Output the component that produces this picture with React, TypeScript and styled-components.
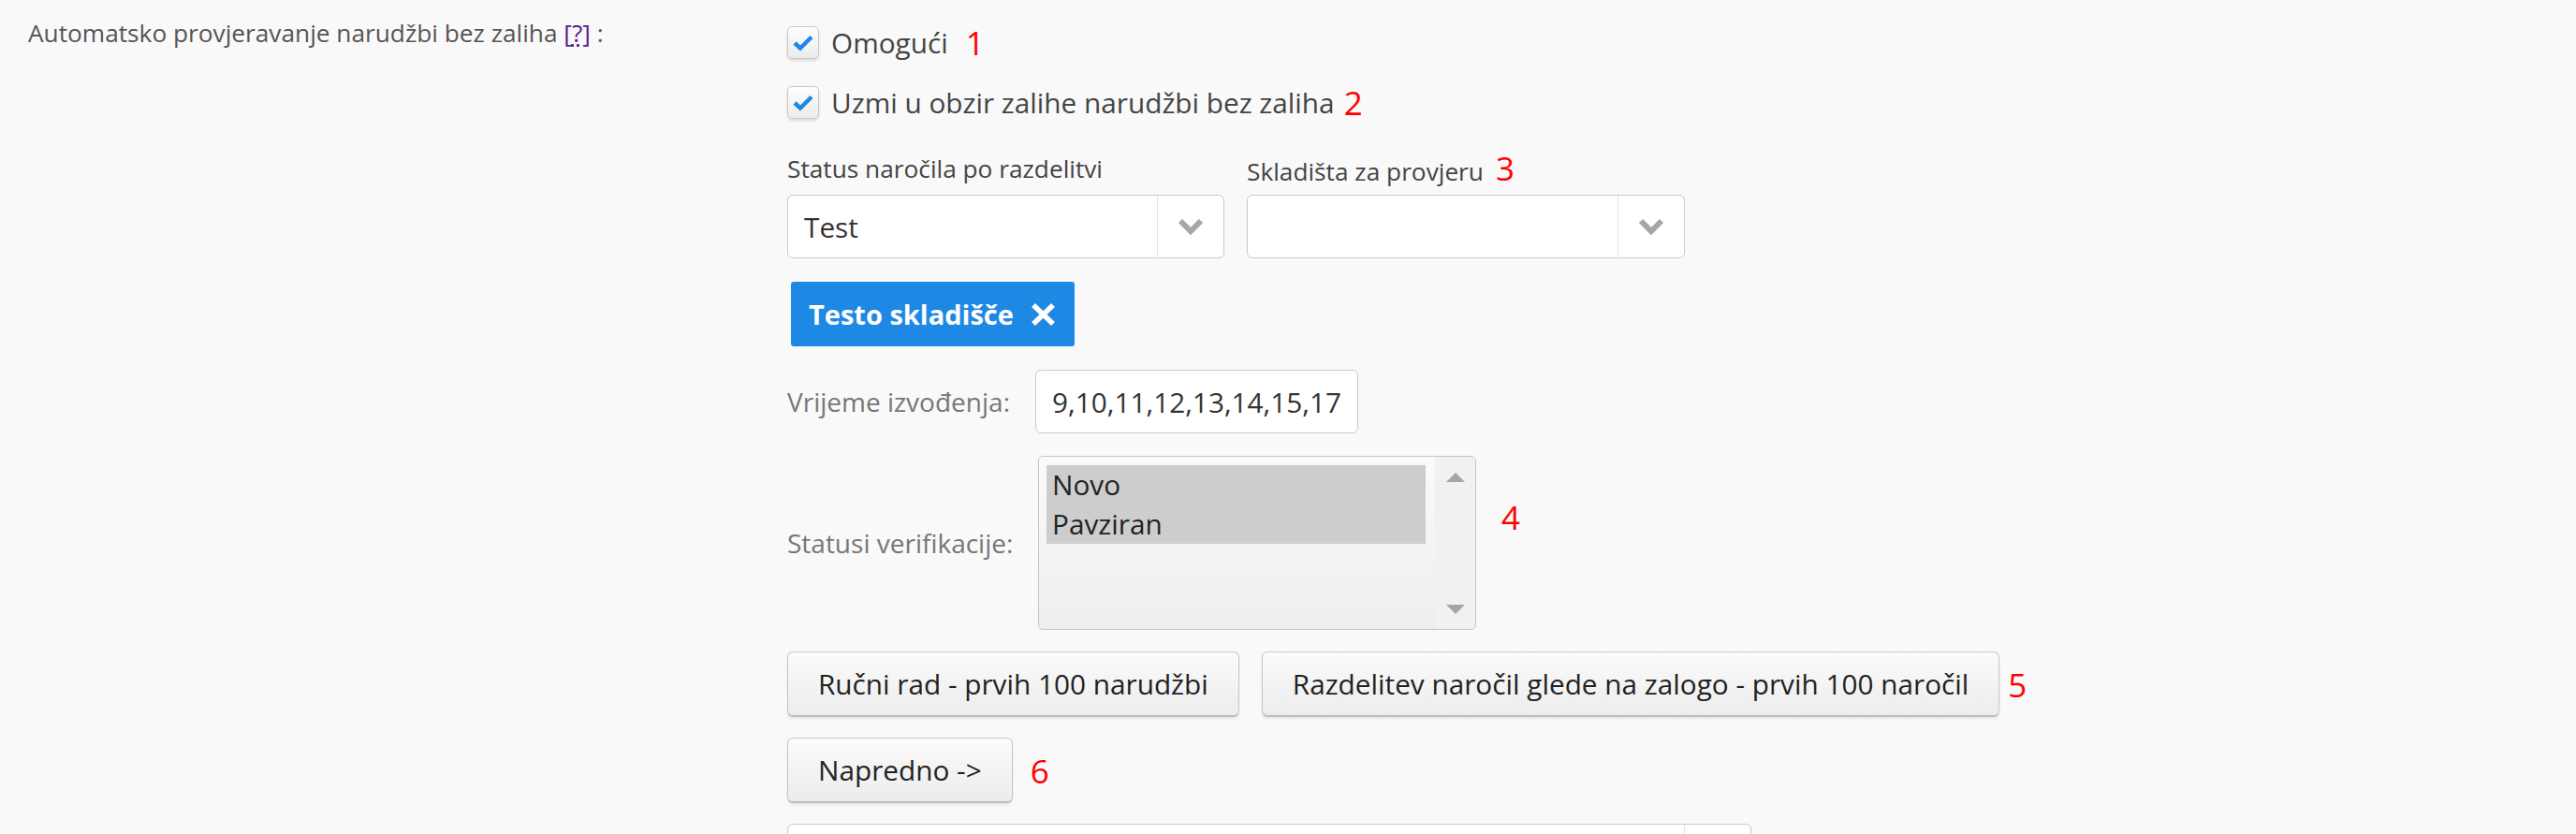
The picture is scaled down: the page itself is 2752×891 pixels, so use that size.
import React from 'react';
import styled, {createGlobalStyle} from 'styled-components';

const GlobalStyle = createGlobalStyle`
	html, body {
		margin: 0;
		padding: 0;
		background: #f9f9f9;
		overflow: hidden;
	}
	body {
		font-family: 'Open Sans', 'Liberation Sans', sans-serif;
		color: #444;
	}
`;

const Page = styled.div`
	display: grid;
	grid-template-columns: 811px 1fr;
	padding-left: 30px;
	height: 891px;
`;

const RowLabel = styled.div`
	padding-top: 17px;
	font-size: 26.25px;
	color: #555;
`;

const Help = styled.a`
	color: #551a8b;
	text-decoration: none;
	span {
		text-decoration: underline dotted;
	}
`;

const Content = styled.div`
	padding-top: 28px;
	display: flex;
	flex-direction: column;
	align-items: flex-start;
`;

const CheckRow = styled.label<{$gap: number}>`
	display: flex;
	align-items: center;
	height: 35px;
	margin-bottom: ${({$gap}) => $gap}px;
	font-size: 29.75px;
	color: #444;
`;

const Box = styled.span`
	box-sizing: border-box;
	width: 34px;
	height: 35px;
	margin-right: 13px;
	border: 1px solid #c8c8c8;
	border-radius: 5px;
	background: linear-gradient(#fdfdfd, #ececec);
	box-shadow: 0 2px 3px rgba(0, 0, 0, 0.12);
	display: flex;
	align-items: center;
	justify-content: center;
`;

const Mark = styled.span<{$left: number; $top?: number}>`
	color: #ff0000;
	font-size: 35px;
	line-height: 1;
	margin-left: ${({$left}) => $left}px;
	margin-top: ${({$top}) => $top ?? 0}px;
`;

const Fields = styled.div`
	display: grid;
	grid-template-columns: 467px 468px;
	column-gap: 24px;
`;

const Field = styled.div`
	display: flex;
	flex-direction: column;
	gap: 10px;
`;

const FieldLabel = styled.div`
	font-size: 26.25px;
	line-height: 36px;
	height: 36px;
	color: #444;
	display: flex;
	align-items: baseline;
`;

const Select = styled.div<{$width?: number}>`
	box-sizing: border-box;
	width: ${({$width}) => ($width ? `${$width}px` : '100%')};
	height: 68px;
	border: 1px solid #c9c9c9;
	border-radius: 6px;
	background: #fff;
	display: flex;
	align-items: center;
	font-size: 29.75px;
	color: #333;
`;

const SelectValue = styled.div`
	flex: 1;
	padding-left: 17px;
`;

const SelectArrow = styled.div`
	width: 70px;
	height: 100%;
	border-left: 1px solid #e2e2e2;
	display: flex;
	align-items: center;
	justify-content: center;
`;

const Tag = styled.div`
	box-sizing: border-box;
	margin: 25px 0 0 4px;
	height: 69px;
	padding: 0 20px 0 19px;
	background: #1e88e5;
	border-radius: 3px;
	color: #fff;
	font-weight: 700;
	font-size: 29px;
	display: flex;
	align-items: center;
	gap: 18px;
`;

const FormRow = styled.div<{$top: number}>`
	margin-top: ${({$top}) => $top}px;
	display: grid;
	grid-template-columns: 265px auto auto;
	align-items: center;
`;

const FormLabel = styled.div`
	font-size: 28px;
	color: #777;
`;

const TextInput = styled.div`
	box-sizing: border-box;
	width: 345px;
	height: 68px;
	padding-left: 17px;
	border: 1px solid #cacaca;
	border-radius: 6px;
	background: #fff;
	font-size: 29.75px;
	color: #333;
	display: flex;
	align-items: center;
`;

const ListBox = styled.div`
	box-sizing: border-box;
	margin-left: 3px;
	width: 468px;
	height: 186px;
	border: 1px solid #c6c6c6;
	border-radius: 5px;
	background: linear-gradient(#fafafa, #eeeeee);
	display: flex;
	overflow: hidden;
	align-self: start;
`;

const Options = styled.div`
	flex: 1;
	padding: 9px 10px 0 8px;
`;

const Option = styled.div<{$selected?: boolean}>`
	height: 42px;
	line-height: 42px;
	padding-left: 6px;
	font-size: 29.75px;
	color: #222;
	background: ${({$selected}) => ($selected ? '#cdcdcd' : 'transparent')};
`;

const Scrollbar = styled.div`
	width: 43px;
	background: #f1f1f1;
	display: flex;
	flex-direction: column;
	justify-content: space-between;
	align-items: center;
	padding: 17px 0 16px;
	box-sizing: border-box;
`;

const ButtonRow = styled.div<{$top: number}>`
	margin-top: ${({$top}) => $top}px;
	display: flex;
	align-items: center;
	gap: 24px;
`;

const Button = styled.button`
	box-sizing: border-box;
	height: 70px;
	padding: 0 32px;
	border: 1px solid #c8c8c8;
	border-bottom: 2px solid #bdbdbd;
	border-radius: 6px;
	background: linear-gradient(#fbfbfb, #ececec);
	box-shadow: 0 2px 3px rgba(0, 0, 0, 0.08);
	font-family: 'Open Sans', 'Liberation Sans', sans-serif;
	font-size: 29.75px;
	color: #222;
`;

const Check = () => (
	<svg width="22" height="18" viewBox="0 0 22 18">
		<path d="M2 9 L8 14.5 L20 2.5" fill="none" stroke="#1e88e5" strokeWidth="4.5" />
	</svg>
);

const Chevron = () => (
	<svg width="28" height="18" viewBox="0 0 28 18">
		<path d="M3 3 L14 14 L25 3" fill="none" stroke="#a6a6a6" strokeWidth="6" />
	</svg>
);

const Cross = () => (
	<svg width="27" height="24" viewBox="0 0 27 24">
		<path d="M3 2 L24 22 M24 2 L3 22" stroke="#fff" strokeWidth="5.5" />
	</svg>
);

const Triangle = ({up}: {up?: boolean}) => (
	<svg width="20" height="10" viewBox="0 0 20 10">
		<path d={up ? 'M0 10 L10 0 L20 10 Z' : 'M0 0 L10 10 L20 0 Z'} fill="#a5a5a5" />
	</svg>
);

export default function App() {
	return (
		<>
			<GlobalStyle />
			<Page>
				<RowLabel>
					Automatsko provjeravanje narudžbi bez zaliha{' '}
					<Help href="#">
						[<span>?</span>]
					</Help>{' '}
					:
				</RowLabel>
				<Content>
					<CheckRow $gap={29}>
						<Box>
							<Check />
						</Box>
						Omogući
						<Mark $left={19}>1</Mark>
					</CheckRow>
					<CheckRow $gap={35}>
						<Box>
							<Check />
						</Box>
						Uzmi u obzir zalihe narudžbi bez zaliha
						<Mark $left={10}>2</Mark>
					</CheckRow>
					<Fields>
						<Field>
							<FieldLabel>Status naročila po razdelitvi</FieldLabel>
							<Select>
								<SelectValue>Test</SelectValue>
								<SelectArrow>
									<Chevron />
								</SelectArrow>
							</Select>
						</Field>
						<Field>
							<FieldLabel>
								Skladišta za provjeru
								<Mark $left={13}>3</Mark>
							</FieldLabel>
							<Select>
								<SelectValue />
								<SelectArrow>
									<Chevron />
								</SelectArrow>
							</Select>
						</Field>
					</Fields>
					<Tag>
						Testo skladišče
						<Cross />
					</Tag>
					<FormRow $top={25}>
						<FormLabel>Vrijeme izvođenja:</FormLabel>
						<TextInput>9,10,11,12,13,14,15,17</TextInput>
					</FormRow>
					<FormRow $top={24}>
						<FormLabel>Statusi verifikacije:</FormLabel>
						<ListBox>
							<Options>
								<Option $selected>Novo</Option>
								<Option $selected>Pavziran</Option>
							</Options>
							<Scrollbar>
								<Triangle up />
								<Triangle />
							</Scrollbar>
						</ListBox>
						<Mark $left={27} $top={-55}>
							4
						</Mark>
					</FormRow>
					<ButtonRow $top={23}>
						<Button>Ručni rad - prvih 100 narudžbi</Button>
						<Button>Razdelitev naročil glede na zalogo - prvih 100 naročil</Button>
						<Mark $left={-15}>5</Mark>
					</ButtonRow>
					<ButtonRow $top={22}>
						<Button>Napredno -&gt;</Button>
						<Mark $left={-5}>6</Mark>
					</ButtonRow>
					<ButtonRow $top={22}>
						<Select $width={1030}>
							<SelectValue />
							<SelectArrow />
						</Select>
					</ButtonRow>
				</Content>
			</Page>
		</>
	);
}
